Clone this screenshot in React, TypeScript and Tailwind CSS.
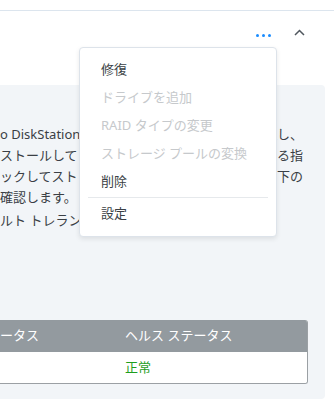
import React from "react";

const lines = [
  { left: "o DiskStation のストレージ", right: "確認し、" },
  { left: "ストールして いるドライブ", right: "いる指" },
  { left: "ックしてストレージ プール", right: "、下の" },
  { left: "確認します。", right: "" },
];

const menuItems = [
  { label: "修復", disabled: false },
  { label: "ドライブを追加", disabled: true },
  { label: "RAID タイプの変更", disabled: true },
  { label: "ストレージ プールの変換", disabled: true },
  { label: "削除", disabled: false },
];

export default function App() {
  return (
    <div
      className="relative w-[334px] h-[416px] overflow-hidden bg-white text-[13px] text-[#3a3f45]"
      style={{ fontFamily: '"Noto Sans", "Noto Sans CJK JP", sans-serif' }}
    >
      {/* top divider */}
      <div className="h-[10px]" />
      <div className="h-px bg-[#dce5ee]" />

      {/* header row */}
      <div className="h-[74px] flex items-start justify-end pt-[19px] pr-[29px] gap-[23px]">
        <div className="flex gap-[3px] mt-[4px]">
          <span className="w-[3px] h-[3px] rounded-full bg-[#1a8cff]" />
          <span className="w-[3px] h-[3px] rounded-full bg-[#1a8cff]" />
          <span className="w-[3px] h-[3px] rounded-full bg-[#1a8cff]" />
        </div>
        <svg width="11" height="7" viewBox="0 0 11 7" className="mt-[-1px]">
          <path d="M1 6 L5.5 1.5 L10 6" fill="none" stroke="#50575e" strokeWidth="1.5" />
        </svg>
      </div>

      {/* panel */}
      <div className="w-[325px] h-[314px] bg-[#f2f5f8] rounded-r-[4px] pt-[39px]">
        <div className="leading-[21px]">
          {lines.map((l, i) => (
            <div key={i} className="flex justify-between whitespace-nowrap pr-[22px] h-[21px]">
              <span>{l.left}</span>
              <span>{l.right}</span>
            </div>
          ))}
          <div className="mt-[2px] whitespace-nowrap h-[21px]">ルト トレランス の設定</div>
        </div>

        <div className="mt-[89px] w-[308px] rounded-r-[3px] overflow-hidden border-r border-b border-[#9ba0a4]">
          <div className="h-[32px] bg-[#939a9f] text-white flex items-center">
            <span className="w-[125px]">ータス</span>
            <span>ヘルス ステータス</span>
          </div>
          <div className="h-[31px] bg-white flex items-center">
            <span className="w-[125px]" />
            <span className="text-[#1e9e1e]">正常</span>
          </div>
        </div>
      </div>

      {/* dropdown menu */}
      <div className="absolute left-[79px] top-[47px] w-[198px] bg-white border border-[#dde3ea] rounded-[4px] shadow-[0_2px_5px_rgba(0,0,0,0.09)] pt-[8px] pb-[8px]">
        {menuItems.map((m) => (
          <div
            key={m.label}
            className={`h-[28px] flex items-center px-[21px] ${m.disabled ? "text-[#c6c9cc]" : "text-[#3a3f45]"}`}
          >
            {m.label}
          </div>
        ))}
        <div className="mx-[8px] mt-[1px] mb-[2px] h-px bg-[#e6e9ec]" />
        <div className="h-[28px] flex items-center px-[21px]">設定</div>
      </div>
    </div>
  );
}
